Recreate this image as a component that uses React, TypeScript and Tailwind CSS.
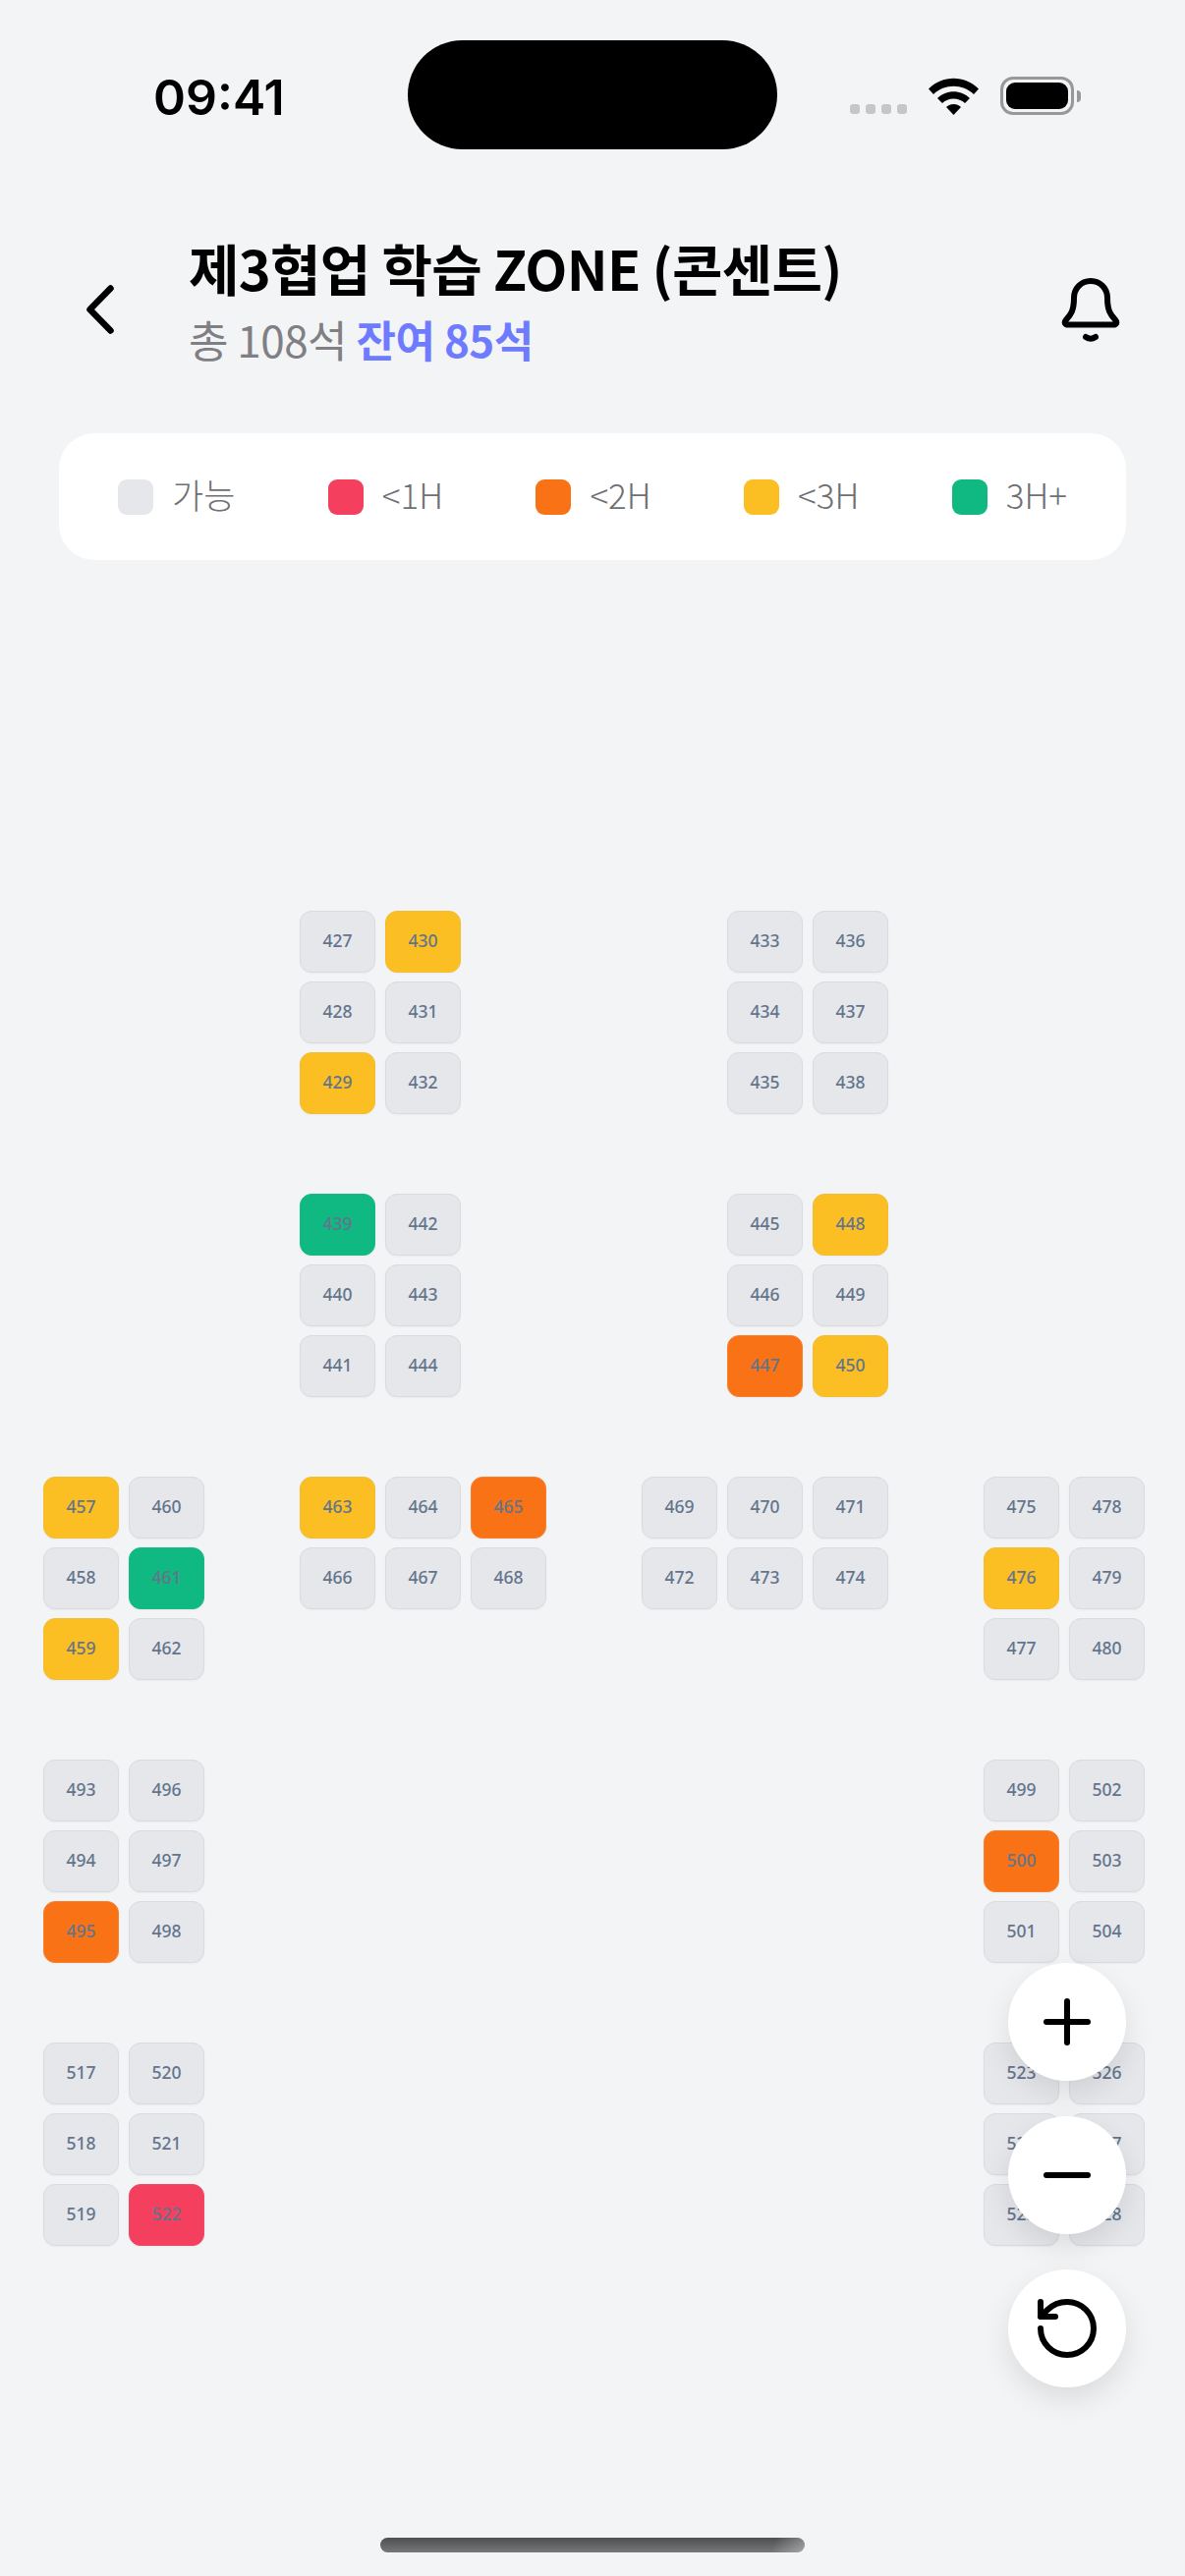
import { Minus, Plus, RotateCcw } from 'lucide-react'

type SeatStatus = 'free' | 'red' | 'orange' | 'yellow' | 'green'

const legend: { label: string; color: string }[] = [
  { label: '가능', color: 'bg-[#e5e7eb]' },
  { label: '<1H', color: 'bg-[#f43f5e]' },
  { label: '<2H', color: 'bg-[#f97316]' },
  { label: '<3H', color: 'bg-[#fbbf24]' },
  { label: '3H+', color: 'bg-[#10b981]' },
]

const seatClass: Record<SeatStatus, string> = {
  free: 'bg-[#e5e7eb] border-[#d9dbe0]',
  red: 'bg-[#f43f5e] border-[#ee4a66]',
  orange: 'bg-[#f97316] border-[#f5812f]',
  yellow: 'bg-[#fbbf24] border-[#f4bc33]',
  green: 'bg-[#10b981] border-[#1ab884]',
}

const taken: Record<number, SeatStatus> = {
  429: 'yellow',
  430: 'yellow',
  439: 'green',
  447: 'orange',
  448: 'yellow',
  450: 'yellow',
  457: 'yellow',
  459: 'yellow',
  461: 'green',
  463: 'yellow',
  465: 'orange',
  476: 'yellow',
  495: 'orange',
  500: 'orange',
  522: 'red',
}

// 13 columns, 0 is an empty cell
const seatRows: number[][] = [
  [0, 0, 0, 427, 430, 0, 0, 0, 433, 436, 0, 0, 0],
  [0, 0, 0, 428, 431, 0, 0, 0, 434, 437, 0, 0, 0],
  [0, 0, 0, 429, 432, 0, 0, 0, 435, 438, 0, 0, 0],
  [0, 0, 0, 0, 0, 0, 0, 0, 0, 0, 0, 0, 0],
  [0, 0, 0, 439, 442, 0, 0, 0, 445, 448, 0, 0, 0],
  [0, 0, 0, 440, 443, 0, 0, 0, 446, 449, 0, 0, 0],
  [0, 0, 0, 441, 444, 0, 0, 0, 447, 450, 0, 0, 0],
  [0, 0, 0, 0, 0, 0, 0, 0, 0, 0, 0, 0, 0],
  [457, 460, 0, 463, 464, 465, 0, 469, 470, 471, 0, 475, 478],
  [458, 461, 0, 466, 467, 468, 0, 472, 473, 474, 0, 476, 479],
  [459, 462, 0, 0, 0, 0, 0, 0, 0, 0, 0, 477, 480],
  [0, 0, 0, 0, 0, 0, 0, 0, 0, 0, 0, 0, 0],
  [493, 496, 0, 0, 0, 0, 0, 0, 0, 0, 0, 499, 502],
  [494, 497, 0, 0, 0, 0, 0, 0, 0, 0, 0, 500, 503],
  [495, 498, 0, 0, 0, 0, 0, 0, 0, 0, 0, 501, 504],
  [0, 0, 0, 0, 0, 0, 0, 0, 0, 0, 0, 0, 0],
  [517, 520, 0, 0, 0, 0, 0, 0, 0, 0, 0, 523, 526],
  [518, 521, 0, 0, 0, 0, 0, 0, 0, 0, 0, 524, 527],
  [519, 522, 0, 0, 0, 0, 0, 0, 0, 0, 0, 525, 528],
]

const StatusIcons = () => (
  <div className="ml-[74px] flex items-start">
    <div className="mt-[65px] flex gap-[6px]">
      {[0, 1, 2, 3].map((dot) => (
        <span key={dot} className="h-[10px] w-[10px] rounded-[3px] bg-[#c6c6c8]" />
      ))}
    </div>
    <svg className="ml-[22px] mt-[38px]" width="51" height="38" viewBox="0 0 51 38">
      <path d="M0 11.5C14-3 37-3 51 11.5L46 17C35 6 16 6 5 17Z" fill="#000" />
      <path d="M9 21C18 12 33 12 42 21L37 26C31 20 20 20 14 26Z" fill="#000" />
      <path d="M18 30C22 26 29 26 33 30L25.500 38Z" fill="#000" />
    </svg>
    <div className="ml-[22px] mt-[37px] flex items-center">
      <div className="flex h-[39px] w-[75px] items-center justify-center rounded-[13px] border-[3px] border-[#98989c]">
        <div className="h-[27px] w-[63px] rounded-[9px] bg-black" />
      </div>
      <div className="ml-[3px] h-[12px] w-[4px] rounded-r-full bg-[#98989c]" />
    </div>
  </div>
)

const RoundButton = ({ children }: { children: React.ReactNode }) => (
  <button className="flex h-[120px] w-[120px] items-center justify-center rounded-full bg-white text-black shadow-[0_12px_30px_rgba(0,0,0,0.1)]">
    {children}
  </button>
)

export default function App() {
  return (
    <div className="relative h-[2622px] w-[1206px] overflow-hidden bg-[#f3f4f6] font-['Noto_Sans_CJK_KR','Noto_Sans',sans-serif]">
      <div className="flex h-[152px] items-start pl-[156px] pt-[41px]">
        <span className="mt-[32px] w-[259px] font-['Inter',sans-serif] text-[50px] leading-[52px] font-semibold text-black">09:41</span>
        <div className="h-[111px] w-[376px] rounded-[56px] bg-black" />
        <StatusIcons />
      </div>

      <header className="mt-[93px] flex h-[130px] items-center pl-[88px] pr-[66px]">
        <svg className="mt-[10px] shrink-0" width="28" height="50" viewBox="0 0 28 50" fill="none">
          <path d="M24.500 3.500 3.500 25l21 21.500" stroke="#000" strokeWidth="6.500" strokeLinecap="round" strokeLinejoin="round" />
        </svg>
        <div className="ml-[76px] flex-1">
          <h1 className="-mt-[8px] text-[56px] leading-[72px] font-bold tracking-[-0.75px] text-black">제3협업 학습 ZONE (콘센트)</h1>
          <p className="mt-[6px] text-[44px] leading-[62px] tracking-[-0.5px] text-[#7f7f84]">
            총 108석 <span className="font-bold text-[#6f7bff]">잔여 85석</span>
          </p>
        </div>
        <svg className="mt-[12px] shrink-0" width="60" height="66" viewBox="0 0 60 66" fill="none">
          <path
            d="M30 3C20 3 13 11 13 20C13 33 10 37 5 42.500C2.500 45.500 4 47.600 7 47.600H53C56 47.600 57.500 45.500 55 42.500C50 37 47 33 47 20C47 11 40 3 30 3Z"
            stroke="#000"
            strokeWidth="6"
            strokeLinejoin="round"
          />
          <path d="M25 60Q30 63.500 35 60" stroke="#000" strokeWidth="6" strokeLinecap="round" />
        </svg>
      </header>

      <div className="mx-[60px] mt-[66px] flex h-[129px] items-center justify-between rounded-[36px] bg-white px-[60px]">
        {legend.map((item) => (
          <div key={item.label} className="flex items-center gap-[19px]">
            <span className={`h-[36px] w-[36px] rounded-[9px] ${item.color}`} />
            <span className="-mt-[6px] text-[35px] leading-[40px] font-light text-[#6f6f74]">{item.label}</span>
          </div>
        ))}
      </div>

      <div className="ml-[44px] mt-[357px] grid grid-cols-[repeat(13,77px)] auto-rows-[63px] gap-x-[10px] gap-y-[9px]">
        {seatRows.flatMap((row, rowIndex) =>
          row.map((seat, colIndex) =>
            seat ? (
              <div
                key={seat}
                className={`flex items-center justify-center rounded-[12px] border-[1.5px] pb-[2px] text-[17.5px] font-medium text-[#64748b] font-['Noto_Sans',sans-serif] shadow-[0_1px_2px_rgba(0,0,0,0.04)] ${seatClass[taken[seat] ?? 'free']}`}
              >
                {seat}
              </div>
            ) : (
              <div key={`${rowIndex}-${colIndex}`} />
            ),
          ),
        )}
      </div>

      <div className="absolute left-[1026px] top-[1998px] flex flex-col gap-[36px]">
        <RoundButton>
          <Plus className="h-[72px] w-[72px]" strokeWidth={2} />
        </RoundButton>
        <RoundButton>
          <Minus className="h-[72px] w-[72px]" strokeWidth={2} />
        </RoundButton>
        <RoundButton>
          <RotateCcw className="h-[72px] w-[72px]" strokeWidth={2} />
        </RoundButton>
      </div>

      <div className="absolute left-[387px] top-[2583px] h-[15px] w-[432px] rounded-full bg-[linear-gradient(110deg,transparent_92%,rgba(255,255,255,0.35)_100%),linear-gradient(180deg,#4f4f4f,#777777)]" />
    </div>
  )
}
